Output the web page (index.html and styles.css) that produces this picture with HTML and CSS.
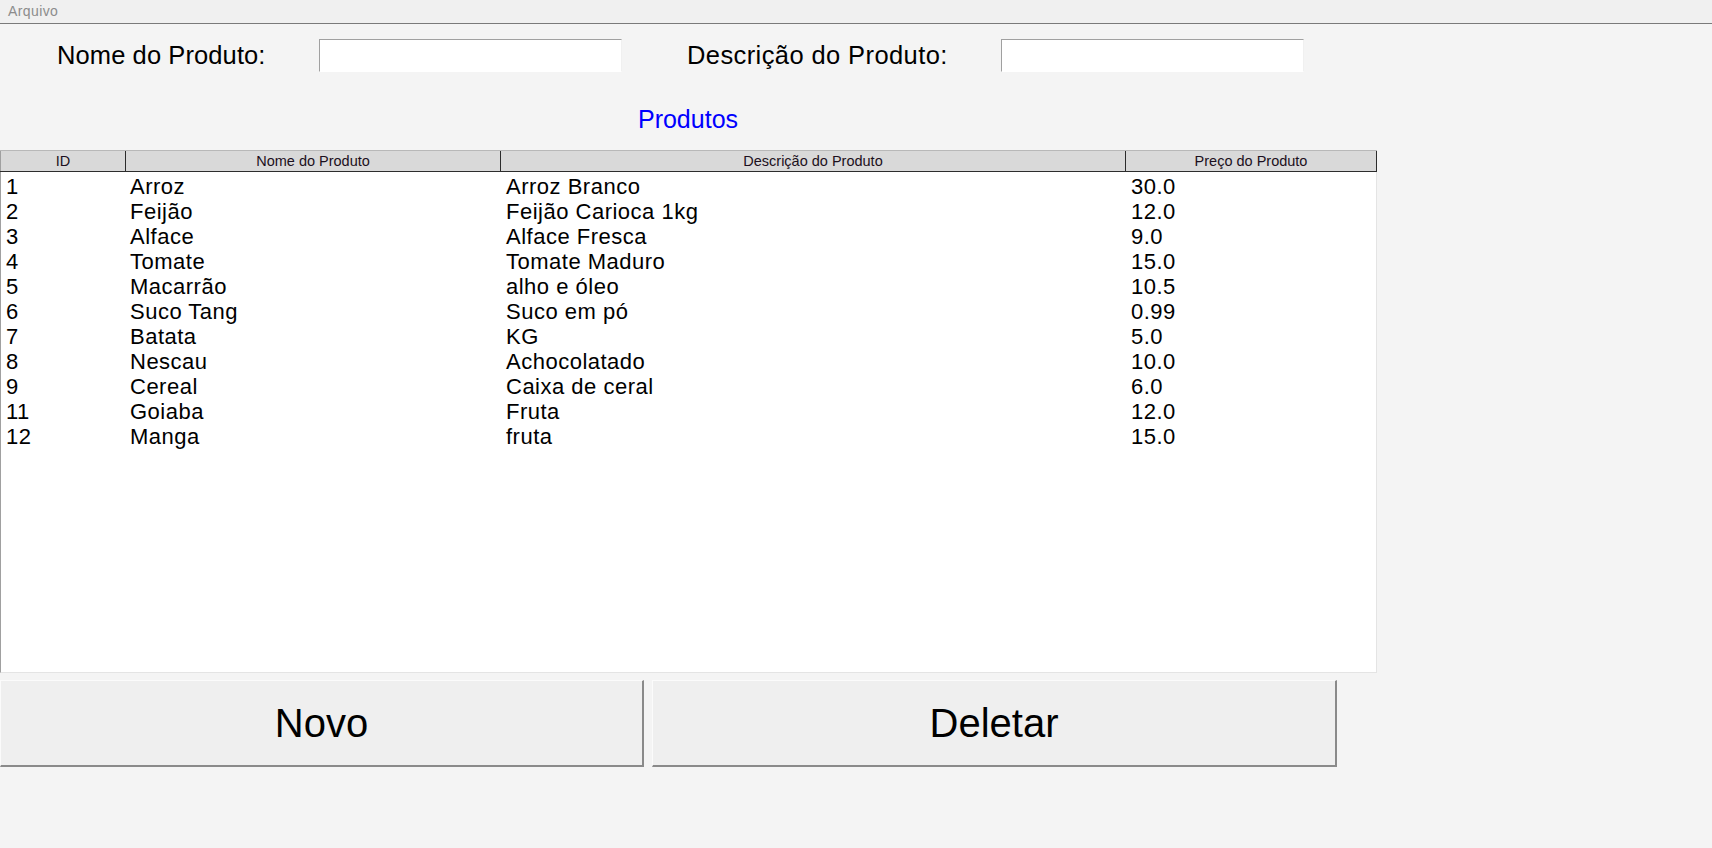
FILE: index.html
```html
<!DOCTYPE html>
<html lang="pt">
<head>
<meta charset="utf-8">
<title>Produtos</title>
<link rel="stylesheet" href="styles.css">
</head>
<body>
<div class="menubar"><span class="menu-item">Arquivo</span></div>

<div class="form-row">
  <label class="label label-nome">Nome do Produto:</label>
  <input class="field" type="text">
  <label class="label label-desc">Descrição do Produto:</label>
  <input class="field" type="text">
</div>

<div class="title">Produtos</div>

<div class="table">
  <div class="thead">
    <div class="th">ID</div>
    <div class="th">Nome do Produto</div>
    <div class="th">Descrição do Produto</div>
    <div class="th">Preço do Produto</div>
  </div>
  <div class="tbody">
    <div class="tr"><div class="td">1</div><div class="td">Arroz</div><div class="td">Arroz Branco</div><div class="td">30.0</div></div>
    <div class="tr"><div class="td">2</div><div class="td">Feijão</div><div class="td">Feijão Carioca 1kg</div><div class="td">12.0</div></div>
    <div class="tr"><div class="td">3</div><div class="td">Alface</div><div class="td">Alface Fresca</div><div class="td">9.0</div></div>
    <div class="tr"><div class="td">4</div><div class="td">Tomate</div><div class="td">Tomate Maduro</div><div class="td">15.0</div></div>
    <div class="tr"><div class="td">5</div><div class="td">Macarrão</div><div class="td">alho e óleo</div><div class="td">10.5</div></div>
    <div class="tr"><div class="td">6</div><div class="td">Suco Tang</div><div class="td">Suco em pó</div><div class="td">0.99</div></div>
    <div class="tr"><div class="td">7</div><div class="td">Batata</div><div class="td">KG</div><div class="td">5.0</div></div>
    <div class="tr"><div class="td">8</div><div class="td">Nescau</div><div class="td">Achocolatado</div><div class="td">10.0</div></div>
    <div class="tr"><div class="td">9</div><div class="td">Cereal</div><div class="td">Caixa de ceral</div><div class="td">6.0</div></div>
    <div class="tr"><div class="td">11</div><div class="td">Goiaba</div><div class="td">Fruta</div><div class="td">12.0</div></div>
    <div class="tr"><div class="td">12</div><div class="td">Manga</div><div class="td">fruta</div><div class="td">15.0</div></div>
  </div>
</div>

<div class="buttons">
  <button class="btn btn-novo">Novo</button>
  <button class="btn btn-deletar">Deletar</button>
</div>
</body>
</html>
```
FILE: styles.css
```css
html, body {
  margin: 0;
  padding: 0;
}
body {
  background: #f4f4f4;
  font-family: "Liberation Sans", Arial, sans-serif;
  color: #000;
  width: 1712px;
  height: 848px;
  overflow: hidden;
}
.menubar {
  height: 23px;
  background: #f0f0f0;
  border-bottom: 1px solid #7a7a7a;
  display: flex;
  align-items: center;
  padding-left: 8px;
}
.menu-item {
  font-size: 14px;
  letter-spacing: 0.4px;
  color: #8c8c8c;
  line-height: 23px;
}
.form-row {
  display: flex;
  align-items: center;
  margin-top: 15px;
  padding-left: 57px;
  height: 33px;
}
.label {
  font-size: 25.5px;
  line-height: 33px;
  white-space: nowrap;
}
.label-nome {
  width: 262px;
  letter-spacing: 0.1px;
}
.label-desc {
  margin-left: 65px;
  width: 314px;
  letter-spacing: 0.4px;
}
.field {
  box-sizing: border-box;
  width: 303px;
  height: 33px;
  margin: 0;
  padding: 0;
  background: #fff;
  border-style: solid;
  border-width: 1px;
  border-color: #a0a0a0 #f0f0f0 #ffffff #a0a0a0;
  outline: none;
}
.title {
  width: 1376px;
  margin-top: 32px;
  text-align: center;
  font-size: 25px;
  line-height: 30px;
  color: #0000ff;
}
.table {
  margin-top: 16px;
  width: 1377px;
}
.thead {
  display: grid;
  grid-template-columns: 126px 375px 625px 251px;
  height: 22px;
  box-sizing: border-box;
  background: #d9d9d9;
  border-top: 1px solid #b8b8b8;
  border-bottom: 1px solid #2c2c2c;
}
.th {
  box-sizing: border-box;
  border-right: 1px solid #2c2c2c;
  text-align: center;
  font-size: 14.5px;
  line-height: 20px;
  color: #1c1020;
}
.th:first-child {
  border-left: 1px solid #a0a0a0;
}
.tbody {
  box-sizing: border-box;
  height: 501px;
  background: #fff;
  border-left: 1px solid #a0a0a0;
  border-right: 1px solid #e4e4e4;
  border-bottom: 1px solid #e4e4e4;
}
.tr {
  display: grid;
  grid-template-columns: 125px 375px 625px 250px;
  box-sizing: border-box;
  height: 25px;
  padding-top: 5px;
}
.td {
  padding-left: 5px;
  font-size: 22px;
  letter-spacing: 0.5px;
  line-height: 20px;
  white-space: nowrap;
}
.tr .td:nth-child(2) {
  padding-left: 4px;
}
.buttons {
  display: flex;
  gap: 8px;
  margin-top: 7px;
}
.btn {
  box-sizing: border-box;
  height: 87px;
  margin: 0;
  padding: 0;
  background: #efefef;
  font-family: "Liberation Sans", Arial, sans-serif;
  font-size: 40px;
  color: #000;
  border-style: solid;
  border-width: 1px 2px 2px 1px;
  border-color: #fbfbfb #8a8a8a #8a8a8a #fbfbfb;
}
.btn-novo {
  width: 644px;
}
.btn-deletar {
  width: 685px;
}
```
